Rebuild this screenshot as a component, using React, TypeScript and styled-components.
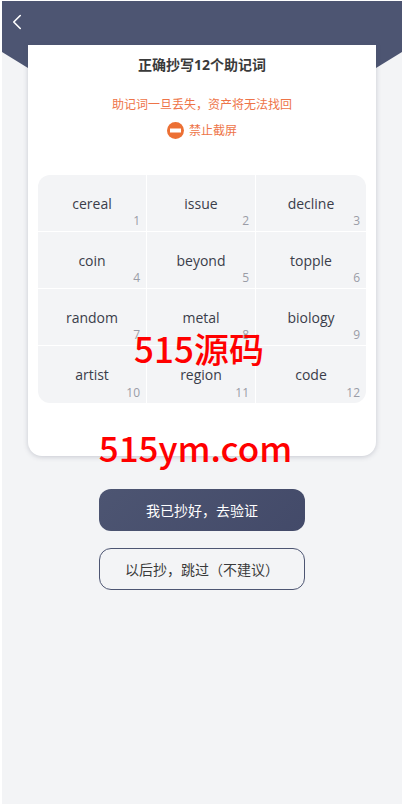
import React, { FC } from "react";
import styled, { createGlobalStyle } from "styled-components";
import { ChevronLeft } from "lucide-react";

const GlobalStyle = createGlobalStyle`
    html, body {
        margin: 0;
        padding: 0;
        background-color: #ffffff;
    }
    body {
        font-family: "Open Sans", "Noto Sans CJK SC", sans-serif;
    }
`

const Page = styled.div`
    position: relative;
    width: 400px;
    height: 803px;
    margin: 1px 0 0 2px;
    background-color: #f3f4f6;
    overflow: hidden;
`

const Header = styled.header`
    height: 70px;
    padding: 8px 0 0 2px;
    box-sizing: border-box;
    background-color: #4d5572;
    color: #ffffff;
    clip-path: polygon(0 0, 100% 0, 100% 51px, 374px 67px, 26px 67px, 0 51px);
`

const BackIcon = styled(ChevronLeft)`
    display: block;
`

const Card = styled.main`
    position: relative;
    width: 348px;
    height: 411px;
    margin: -26px auto 0;
    padding: 12px 10px 0;
    box-sizing: border-box;
    background-color: #ffffff;
    border-radius: 0 0 14px 14px;
    box-shadow: 0 1px 5px rgba(70, 75, 100, 0.25);
    display: flex;
    flex-direction: column;
    align-items: center;
`

const Title = styled.h2`
    margin: 0;
    font-size: 14px;
    line-height: 16px;
    font-weight: 700;
    color: #3a3a3a;
`

const Warning = styled.p`
    margin: 24px 0 0;
    font-size: 12px;
    line-height: 16px;
    color: #ee7448;
`

const ForbidRow = styled.div`
    margin-top: 9px;
    display: flex;
    align-items: center;
    gap: 5px;
    font-size: 12px;
    line-height: 16px;
    color: #ee7448;
`

const ForbidIcon = styled.svg`
    width: 17px;
    height: 17px;
`

const WordGrid = styled.div`
    width: 328px;
    margin-top: 36px;
    display: grid;
    grid-template-columns: 108px 108px 110px;
    grid-template-rows: 56px 56px 56px 57px;
    gap: 1px;
    border-radius: 12px;
    overflow: hidden;
`

const WordCell = styled.div`
    position: relative;
    padding-top: 19px;
    box-sizing: border-box;
    background-color: #f3f4f6;
    text-align: center;
    font-size: 14px;
    line-height: 20px;
    color: #3a3d4a;
`

const WordIndex = styled.span`
    position: absolute;
    right: 6px;
    bottom: 2px;
    font-size: 12px;
    line-height: 16px;
    color: #9a9ca6;
`

const Actions = styled.div`
    position: relative;
    margin-top: 33px;
    display: flex;
    flex-direction: column;
    align-items: center;
    gap: 17px;
`

const ActionButton = styled.button<{ $primary?: boolean }>`
    width: 206px;
    height: 42px;
    padding: 0;
    box-sizing: border-box;
    border: ${(p) => (p.$primary ? "none" : "1px solid #4d5572")};
    border-radius: 12px;
    background: ${(p) => (p.$primary ? "linear-gradient(135deg, #4d5572, #434a69)" : "transparent")};
    color: ${(p) => (p.$primary ? "#ffffff" : "#3a3a3a")};
    font-family: "Noto Sans CJK SC", sans-serif;
    font-size: 14px;
`

const WatermarkLayer = styled.div`
    position: absolute;
    top: 329px;
    left: 0;
    width: 394px;
    display: flex;
    flex-direction: column;
    align-items: center;
    gap: 64px;
    font-family: "Noto Sans CJK SC", sans-serif;
    font-size: 35px;
    line-height: 35px;
    font-weight: 500;
    color: #ff0000;
    white-space: nowrap;
`

const WatermarkUrl = styled.div`
    margin-right: 7px;
`

const words = [
    "cereal", "issue", "decline",
    "coin", "beyond", "topple",
    "random", "metal", "biology",
    "artist", "region", "code",
]

const App: FC = () => {

    return (
        <Page>
            <GlobalStyle />
            <Header>
                <BackIcon size={26} strokeWidth={1.5} />
            </Header>
            <Card>
                <Title>正确抄写12个助记词</Title>
                <Warning>助记词一旦丢失，资产将无法找回</Warning>
                <ForbidRow>
                    <ForbidIcon viewBox="0 0 17 17">
                        <circle cx="8.5" cy="8.5" r="8.5" fill="#ec7034" />
                        <rect x="3" y="6.5" width="11" height="4" fill="#ffffff" />
                    </ForbidIcon>
                    禁止截屏
                </ForbidRow>
                <WordGrid>
                    {words.map((word, i) => (
                        <WordCell key={word}>
                            {word}
                            <WordIndex>{i + 1}</WordIndex>
                        </WordCell>
                    ))}
                </WordGrid>
            </Card>
            <Actions>
                <ActionButton $primary>我已抄好，去验证</ActionButton>
                <ActionButton>以后抄，跳过（不建议）</ActionButton>
            </Actions>
            <WatermarkLayer>
                <div>515源码</div>
                <WatermarkUrl>515ym.com</WatermarkUrl>
            </WatermarkLayer>
        </Page>
    )

}

export default App
